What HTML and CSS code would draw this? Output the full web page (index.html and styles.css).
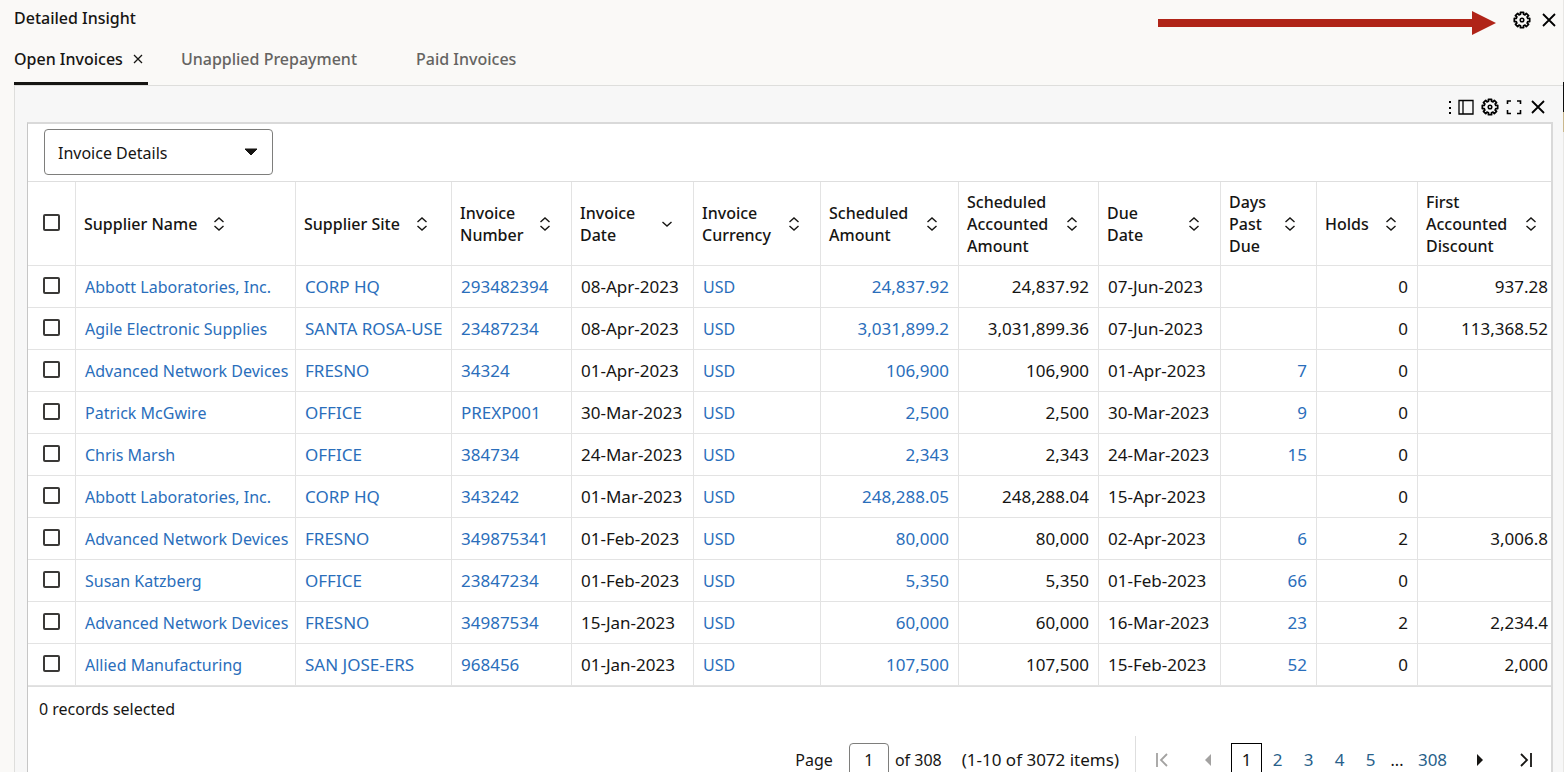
FILE: index.html
```html
<!DOCTYPE html>
<html lang="en">
<head>
<meta charset="utf-8">
<title>Detailed Insight</title>
<link rel="stylesheet" href="styles.css">
</head>
<body>
<svg class="symbols" aria-hidden="true">
  <symbol id="gear" viewBox="-9 -9 18 18"><path d="M5.75-1.5 7.7-1.6V1.6L5.75 1.500 5.13 3 6.58 4.31 4.31 6.58 3 5.130 1.500 5.750 1.600 7.700H-1.600L-1.500 5.750-3 5.130-4.310 6.580-6.580 4.310-5.130 3-5.750 1.500-7.700 1.600V-1.600L-5.750-1.500-5.130-3-6.580-4.310-4.310-6.580-3-5.130-1.500-5.750-1.600-7.700H1.600L1.500-5.750 3-5.130 4.310-6.580 6.580-4.310 5.130-3Z" fill="none" stroke="currentColor" stroke-width="1.7" stroke-linejoin="round"/><circle r="1.8" fill="none" stroke="currentColor" stroke-width="1.5"/></symbol>
  <symbol id="close" viewBox="0 0 18 18"><path d="M3 3 15 15M15 3 3 15" fill="none" stroke="currentColor" stroke-width="1.8"/></symbol>
  <symbol id="sort" viewBox="0 0 12 16"><path d="M1.5 6 6 2 10.500 6M1.500 10 6 14 10.500 10" fill="none" stroke="currentColor" stroke-width="1.400"/></symbol>
  <symbol id="down" viewBox="0 0 12 16"><path d="M1.500 6 6 10 10.500 6" fill="none" stroke="currentColor" stroke-width="1.400"/></symbol>
</svg>
<main class="insight">
  <header class="insight-header">
    <h1 class="title">Detailed Insight</h1>
    <svg class="arrow" viewBox="0 0 338 24" aria-hidden="true"><path d="M0 8H314V0L338 12 314 24V16H0Z" fill="#b02418"/></svg>
    <div class="header-actions">
      <button class="icon-button" type="button" aria-label="Settings"><svg class="icon"><use href="#gear"/></svg></button>
      <button class="icon-button" type="button" aria-label="Close"><svg class="icon"><use href="#close"/></svg></button>
    </div>
  </header>
  <nav class="tabs">
    <div class="tab tab-active"><a class="tab-link" href="#open">Open Invoices</a><button class="tab-close" type="button" aria-label="Close tab"><svg class="icon-small" viewBox="0 0 10 10"><path d="M1 1 9 9M9 1 1 9" stroke="currentColor" stroke-width="1.300"/></svg></button></div>
    <div class="tab"><a class="tab-link" href="#unapplied">Unapplied Prepayment</a></div>
    <div class="tab"><a class="tab-link" href="#paid">Paid Invoices</a></div>
  </nav>
  <section class="tab-panel" id="open">
    <div class="toolbar">
      <button class="icon-button more" type="button" aria-label="More"><svg class="icon-more" viewBox="0 0 4 18"><path d="M1 3h2v2H1zM1 9h2v2H1zM1 14h2v2H1z"/></svg></button>
      <button class="icon-button" type="button" aria-label="Show panel"><svg class="icon" viewBox="0 0 18 18"><path d="M2 2.500H16V16H2ZM6 2.500V16" fill="none" stroke="currentColor" stroke-width="1.300"/></svg></button>
      <button class="icon-button" type="button" aria-label="Grid settings"><svg class="icon"><use href="#gear"/></svg></button>
      <button class="icon-button" type="button" aria-label="Full screen"><svg class="icon" viewBox="0 0 18 18"><path d="M2.500 6V3H6M12 3H15.500V6M15.500 12V15.500H12M6 15.500H2.500V12" fill="none" stroke="currentColor" stroke-width="1.600"/></svg></button>
      <button class="icon-button" type="button" aria-label="Close grid"><svg class="icon"><use href="#close"/></svg></button>
    </div>
    <div class="card">
      <div class="view-picker">
        <select class="view-select" aria-label="View"><option>Invoice Details</option></select>
        <svg class="caret" viewBox="0 0 14 8" aria-hidden="true"><path d="M1 1H13L7 7Z" stroke="currentColor" stroke-linejoin="round" fill="currentColor"/></svg>
      </div>
      <table class="grid">
        <colgroup>
          <col class="c-check"><col class="c-name"><col class="c-site"><col class="c-number"><col class="c-date"><col class="c-currency"><col class="c-amount"><col class="c-accounted"><col class="c-date"><col class="c-days"><col class="c-holds"><col class="c-discount">
        </colgroup>
        <thead>
          <tr>
            <th class="check"><input class="box" type="checkbox" aria-label="Select all"></th>
            <th><div class="head head-start"><span>Supplier Name</span><svg class="sort"><use href="#sort"/></svg></div></th>
            <th><div class="head head-start"><span>Supplier Site</span><svg class="sort"><use href="#sort"/></svg></div></th>
            <th><div class="head"><span>Invoice<br>Number</span><svg class="sort"><use href="#sort"/></svg></div></th>
            <th><div class="head"><span>Invoice<br>Date</span><svg class="sort"><use href="#down"/></svg></div></th>
            <th><div class="head"><span>Invoice<br>Currency</span><svg class="sort"><use href="#sort"/></svg></div></th>
            <th><div class="head"><span>Scheduled<br>Amount</span><svg class="sort"><use href="#sort"/></svg></div></th>
            <th><div class="head"><span>Scheduled<br>Accounted<br>Amount</span><svg class="sort"><use href="#sort"/></svg></div></th>
            <th><div class="head"><span>Due<br>Date</span><svg class="sort"><use href="#sort"/></svg></div></th>
            <th><div class="head"><span>Days<br>Past<br>Due</span><svg class="sort"><use href="#sort"/></svg></div></th>
            <th><div class="head"><span>Holds</span><svg class="sort"><use href="#sort"/></svg></div></th>
            <th><div class="head head-last"><span>First<br>Accounted<br>Discount</span><svg class="sort"><use href="#sort"/></svg></div></th>
          </tr>
        </thead>
        <tbody>
          <tr><td class="check"><input class="box" type="checkbox" aria-label="Select 293482394"></td><td><a href="#s">Abbott Laboratories, Inc.</a></td><td class="num"><a href="#s">CORP HQ</a></td><td class="num"><a href="#i">293482394</a></td><td class="num">08-Apr-2023</td><td><a href="#c">USD</a></td><td class="num end"><a href="#a">24,837.92</a></td><td class="num end">24,837.92</td><td class="num">07-Jun-2023</td><td class="num end"></td><td class="num end">0</td><td class="num end last">937.28</td></tr>
          <tr><td class="check"><input class="box" type="checkbox" aria-label="Select 23487234"></td><td><a href="#s">Agile Electronic Supplies</a></td><td class="num"><a href="#s">SANTA ROSA-USE</a></td><td class="num"><a href="#i">23487234</a></td><td class="num">08-Apr-2023</td><td><a href="#c">USD</a></td><td class="num end"><a href="#a">3,031,899.2</a></td><td class="num end">3,031,899.36</td><td class="num">07-Jun-2023</td><td class="num end"></td><td class="num end">0</td><td class="num end last">113,368.52</td></tr>
          <tr><td class="check"><input class="box" type="checkbox" aria-label="Select 34324"></td><td><a href="#s">Advanced Network Devices</a></td><td class="num"><a href="#s">FRESNO</a></td><td class="num"><a href="#i">34324</a></td><td class="num">01-Apr-2023</td><td><a href="#c">USD</a></td><td class="num end"><a href="#a">106,900</a></td><td class="num end">106,900</td><td class="num">01-Apr-2023</td><td class="num end"><a href="#d">7</a></td><td class="num end">0</td><td class="num end last"></td></tr>
          <tr><td class="check"><input class="box" type="checkbox" aria-label="Select PREXP001"></td><td><a href="#s">Patrick McGwire</a></td><td class="num"><a href="#s">OFFICE</a></td><td class="num"><a href="#i">PREXP001</a></td><td class="num">30-Mar-2023</td><td><a href="#c">USD</a></td><td class="num end"><a href="#a">2,500</a></td><td class="num end">2,500</td><td class="num">30-Mar-2023</td><td class="num end"><a href="#d">9</a></td><td class="num end">0</td><td class="num end last"></td></tr>
          <tr><td class="check"><input class="box" type="checkbox" aria-label="Select 384734"></td><td><a href="#s">Chris Marsh</a></td><td class="num"><a href="#s">OFFICE</a></td><td class="num"><a href="#i">384734</a></td><td class="num">24-Mar-2023</td><td><a href="#c">USD</a></td><td class="num end"><a href="#a">2,343</a></td><td class="num end">2,343</td><td class="num">24-Mar-2023</td><td class="num end"><a href="#d">15</a></td><td class="num end">0</td><td class="num end last"></td></tr>
          <tr><td class="check"><input class="box" type="checkbox" aria-label="Select 343242"></td><td><a href="#s">Abbott Laboratories, Inc.</a></td><td class="num"><a href="#s">CORP HQ</a></td><td class="num"><a href="#i">343242</a></td><td class="num">01-Mar-2023</td><td><a href="#c">USD</a></td><td class="num end"><a href="#a">248,288.05</a></td><td class="num end">248,288.04</td><td class="num">15-Apr-2023</td><td class="num end"></td><td class="num end">0</td><td class="num end last"></td></tr>
          <tr><td class="check"><input class="box" type="checkbox" aria-label="Select 349875341"></td><td><a href="#s">Advanced Network Devices</a></td><td class="num"><a href="#s">FRESNO</a></td><td class="num"><a href="#i">349875341</a></td><td class="num">01-Feb-2023</td><td><a href="#c">USD</a></td><td class="num end"><a href="#a">80,000</a></td><td class="num end">80,000</td><td class="num">02-Apr-2023</td><td class="num end"><a href="#d">6</a></td><td class="num end">2</td><td class="num end last">3,006.8</td></tr>
          <tr><td class="check"><input class="box" type="checkbox" aria-label="Select 23847234"></td><td><a href="#s">Susan Katzberg</a></td><td class="num"><a href="#s">OFFICE</a></td><td class="num"><a href="#i">23847234</a></td><td class="num">01-Feb-2023</td><td><a href="#c">USD</a></td><td class="num end"><a href="#a">5,350</a></td><td class="num end">5,350</td><td class="num">01-Feb-2023</td><td class="num end"><a href="#d">66</a></td><td class="num end">0</td><td class="num end last"></td></tr>
          <tr><td class="check"><input class="box" type="checkbox" aria-label="Select 34987534"></td><td><a href="#s">Advanced Network Devices</a></td><td class="num"><a href="#s">FRESNO</a></td><td class="num"><a href="#i">34987534</a></td><td class="num">15-Jan-2023</td><td><a href="#c">USD</a></td><td class="num end"><a href="#a">60,000</a></td><td class="num end">60,000</td><td class="num">16-Mar-2023</td><td class="num end"><a href="#d">23</a></td><td class="num end">2</td><td class="num end last">2,234.4</td></tr>
          <tr><td class="check"><input class="box" type="checkbox" aria-label="Select 968456"></td><td><a href="#s">Allied Manufacturing</a></td><td class="num"><a href="#s">SAN JOSE-ERS</a></td><td class="num"><a href="#i">968456</a></td><td class="num">01-Jan-2023</td><td><a href="#c">USD</a></td><td class="num end"><a href="#a">107,500</a></td><td class="num end">107,500</td><td class="num">15-Feb-2023</td><td class="num end"><a href="#d">52</a></td><td class="num end">0</td><td class="num end last">2,000</td></tr>
        </tbody>
      </table>
      <p class="selected">0 records selected</p>
      <div class="pager">
        <label class="page-label" for="page">Page</label>
        <input class="page-input" id="page" type="text" value="1">
        <span class="page-total">of 308</span>
        <span class="page-items">(1-10 of 3072 items)</span>
        <nav class="pages" aria-label="Pages">
          <button class="step" type="button" aria-label="First page" disabled><svg class="icon-step" viewBox="0 0 14 16"><path d="M2 1V15M12 2 6 8 12 14" fill="none" stroke="currentColor" stroke-width="1.800"/></svg></button>
          <button class="step" type="button" aria-label="Previous page" disabled><svg class="icon-step" viewBox="0 0 14 16"><path d="M10 2V14L4 8Z" fill="currentColor"/></svg></button>
          <a class="page page-current" href="#p1">1</a>
          <a class="page" href="#p2">2</a>
          <a class="page" href="#p3">3</a>
          <a class="page" href="#p4">4</a>
          <a class="page" href="#p5">5</a>
          <span class="dots">...</span>
          <a class="page page-wide" href="#p308">308</a>
          <button class="step" type="button" aria-label="Next page"><svg class="icon-step" viewBox="0 0 14 16"><path d="M4 2V14L10 8Z" fill="currentColor"/></svg></button>
          <button class="step" type="button" aria-label="Last page"><svg class="icon-step" viewBox="0 0 14 16"><path d="M12 1V15M2 2 8 8 2 14" fill="none" stroke="currentColor" stroke-width="1.800"/></svg></button>
        </nav>
      </div>
    </div>
  </section>
  <div class="edge" aria-hidden="true"></div>
</main>
</body>
</html>
```
FILE: styles.css
```css
* { box-sizing: border-box; }

body {
  margin: 0;
  height: 100vh;
  overflow: hidden;
  background: #faf9f7;
  color: #161513;
  font: 16px/22px "Noto Sans", "Open Sans", sans-serif;
}

button, input, select { font: inherit; color: inherit; }

a { color: #2a6ebb; text-decoration: none; }

.symbols { position: absolute; width: 0; height: 0; }

.insight {
  position: relative;
  display: flex;
  flex-direction: column;
  min-height: 100vh;
  border-right: 1px solid #e8e7e5;
}

.insight-header {
  position: relative;
  display: flex;
  justify-content: space-between;
  align-items: center;
  height: 35px;
  padding: 0 5px 0 14px;
}

.title { margin: 0; font-size: 16px; font-weight: 550; }

.arrow { position: absolute; top: 11px; right: 67px; width: 338px; height: 24px; }

.header-actions { display: flex; gap: 9px; padding-top: 4px; }

.icon-button {
  display: flex;
  padding: 0;
  border: 0;
  background: none;
  color: #000;
}

.icon { width: 18px; height: 18px; }
.icon-small { width: 10px; height: 10px; }
.icon-more { width: 4px; height: 18px; }
.icon-step { width: 14px; height: 16px; }

.tabs { display: flex; gap: 33px; padding-left: 14px; }

.tab {
  display: flex;
  align-items: center;
  height: 50px;
  padding: 0 26px 3px 0;
  font-weight: 500;
}

.tab-link { color: #656462; }

.tab-active {
  gap: 10px;
  padding: 0 5px 0 0;
  border-bottom: 3px solid #161513;
  font-weight: 550;
}

.tab-active .tab-link { color: #161513; }

.tab-close { display: flex; padding: 0; border: 0; background: none; }

.tab-panel {
  flex: 1;
  margin-left: 14px;
  padding: 0 10px 0 12px;
  border-top: 1px solid #dededc;
  border-left: 1px solid #dededc;
  background: #f7f7f7;
}

.toolbar {
  display: flex;
  justify-content: flex-end;
  align-items: center;
  gap: 6px;
  height: 36px;
  padding: 5px 6px 0 0;
}

.more { margin-right: -1px; }

.card {
  border: 1px solid #c6c6c6;
  border-top: 2px solid #d9d9d9;
  border-right: 2px solid #d9d9d9;
  background: #fff;
}

.view-picker {
  position: relative;
  width: 229px;
  margin: 5px 0 6px 16px;
}

.view-select {
  display: block;
  width: 100%;
  height: 46px;
  padding: 1px 12px 0 13px;
  border: 1px solid #7e7e7c;
  border-radius: 4px;
  background: #fff;
  appearance: none;
}

.caret { position: absolute; top: 19px; right: 15px; width: 14px; height: 8px; pointer-events: none; }

.grid {
  width: 100%;
  table-layout: fixed;
  border-top: 1px solid #dedede;
  border-bottom: 1px solid #dedede;
  border-spacing: 0;
}

.c-check { width: 48px; }
.c-name { width: 220px; }
.c-site { width: 156px; }
.c-number { width: 120px; }
.c-date { width: 122px; }
.c-currency { width: 127px; }
.c-amount { width: 138px; }
.c-accounted { width: 140px; }
.c-days { width: 96px; }
.c-holds { width: 101px; }
.c-discount { width: 133px; }

.grid th, .grid td {
  border-right: 1px solid #e3e3e3;
  border-bottom: 1px solid #e3e3e3;
  text-align: left;
  white-space: nowrap;
}

.grid th { height: 84px; padding: 0; font-weight: 550; }
.grid td { height: 42px; padding: 0 9px; }
.grid tr > :last-child { border-right: 0; }
.grid .check { padding: 0 0 2px 15px; }
.grid .num { font-size: 17px; }
.grid .end { text-align: right; }
.grid .last { padding-right: 3px; }

.head {
  display: flex;
  justify-content: space-between;
  align-items: center;
  padding: 0 20px 0 8px;
}

.head-start { justify-content: flex-start; gap: 16px; padding-right: 0; }
.head-last { padding-right: 14px; }

.sort { flex: none; width: 12px; height: 16px; }

.box {
  display: block;
  width: 17px;
  height: 17px;
  margin: 0;
  border: 2px solid #3a3937;
  border-radius: 2px;
  background: #fff;
  appearance: none;
}

.selected { margin: 11px 0 0 11px; }

.pager {
  display: flex;
  justify-content: flex-end;
  align-items: center;
  height: 48px;
  margin-top: 16px;
  padding-right: 2px;
}

.page-input {
  width: 40px;
  height: 34px;
  margin: 0 6px 0 16px;
  padding: 0;
  border: 1px solid #7e7e7c;
  border-radius: 4px;
  background: #fff;
  text-align: center;
}

.page-items { margin: 0 16px 0 20px; font-size: 17px; }

.pages {
  display: flex;
  align-items: center;
  height: 48px;
  padding-left: 3px;
  border-left: 1px solid #dedede;
}

.step {
  display: flex;
  justify-content: center;
  width: 46px;
  padding: 0;
  border: 0;
  background: none;
}

.step:disabled { color: #a3a2a1; }

.page {
  width: 31px;
  color: #28618a;
  font-size: 17px;
  line-height: 32px;
  text-align: center;
}

.page-current { border: 1px solid #000; color: #161513; }
.page-wide { width: 49px; }
.dots { width: 22px; text-align: center; }

/* Sliver of the page behind the panel */
.edge {
  position: absolute;
  top: 82px;
  right: -1px;
  width: 1px;
  height: 50px;
  background: linear-gradient(#0c0c0c 60%, #c9b78d 60%);
}
```
